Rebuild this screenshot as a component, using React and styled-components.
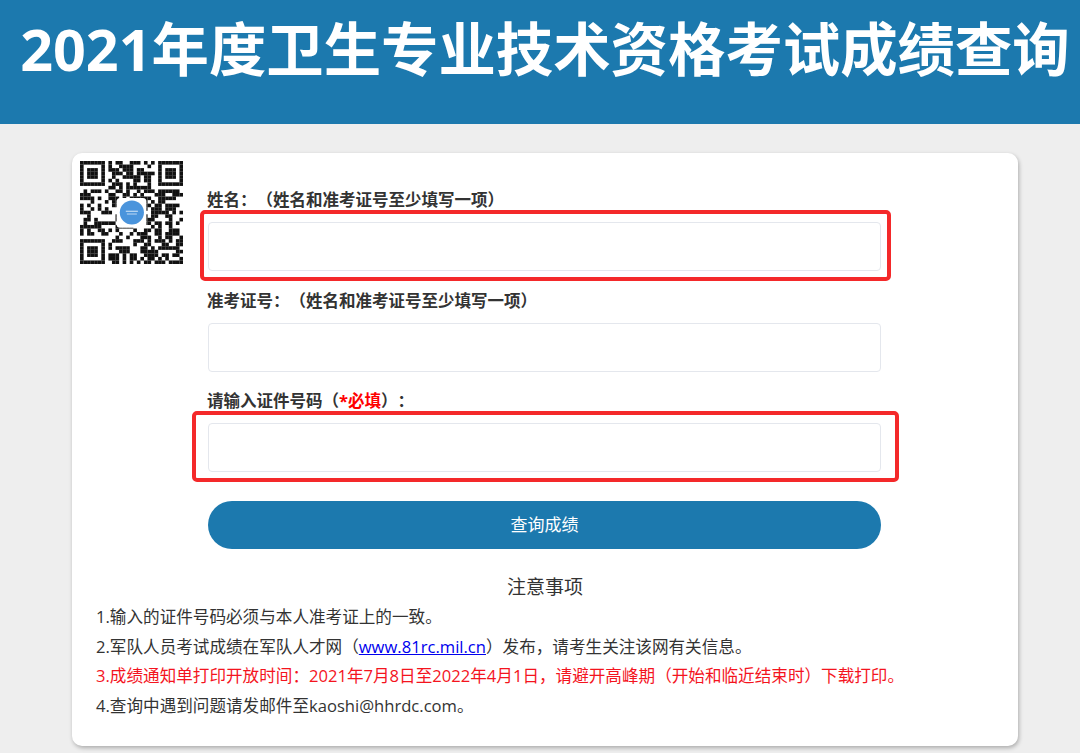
import React from "react";
import styled, { createGlobalStyle } from "styled-components";

const GlobalStyle = createGlobalStyle`
  html, body {
    margin: 0;
    padding: 0;
    background: #eeeeee;
  }
  body {
    font-family: "Open Sans", "Noto Sans CJK SC", sans-serif;
    color: #333;
    text-spacing-trim: space-all;
  }
  * {
    box-sizing: border-box;
  }
`;

const Page = styled.div`
  width: 1080px;
  height: 753px;
  overflow: hidden;
`;

const Header = styled.header`
  height: 124px;
  padding: 7px 0 0 10px;
  background: #1c79ae;
  text-align: center;
`;

const Title = styled.h1`
  margin: 0;
  color: #fff;
  font-family: "Open Sans", "Noto Sans CJK SC", sans-serif;
  font-size: 57.4px;
  font-weight: 700;
  line-height: 84px;
  white-space: nowrap;
`;

const Card = styled.main`
  width: 946px;
  height: 593px;
  margin: 29px 0 0 72px;
  padding: 8px;
  background: #fff;
  border-radius: 10px;
  box-shadow: 1px 2px 4px rgba(0, 0, 0, 0.28);
`;

const TopRow = styled.div`
  display: flex;
  gap: 25px;
`;

const QrBox = styled.div`
  flex: none;
  width: 103px;
  height: 103px;
  filter: blur(0.5px);
`;

const Form = styled.form`
  width: 673px;
  padding-top: 28px;
`;

const Field = styled.div`
  margin-bottom: 18.5px;
`;

const Label = styled.label`
  display: block;
  margin: 0 0 11px -1px;
  color: #333;
  font-size: 16.5px;
  font-weight: 700;
  line-height: 22px;
`;

const Required = styled.span`
  color: #f00;
`;

const InputWrap = styled.div`
  position: relative;
`;

const Input = styled.input`
  display: block;
  width: 100%;
  height: 49px;
  border: 1px solid #e4e7ed;
  border-radius: 4px;
  background: #fff;
  outline: none;
`;

// red hand-drawn annotation box lying over the field
const RedFrame = styled.div`
  position: absolute;
  top: -12px;
  bottom: -10px;
  left: ${(p) => p.$left}px;
  right: ${(p) => p.$right}px;
  border: 4px solid #f4292a;
  border-radius: 5px;
  pointer-events: none;
`;

const SubmitButton = styled.button`
  display: block;
  width: 100%;
  height: 48px;
  margin-top: 29px;
  padding: 0 0 3px;
  border: none;
  border-radius: 24px;
  background: #1c79ae;
  color: #fff;
  font-family: inherit;
  font-size: 17px;
`;

const NotesTitle = styled.div`
  margin-top: 25px;
  color: #333;
  font-size: 19px;
  line-height: 26px;
  text-align: center;
`;

const Notes = styled.ol`
  list-style: none;
  margin: 2px 0 0;
  padding: 0 0 0 16px;
`;

const Note = styled.li`
  color: ${(p) => (p.$alert ? "#f4141e" : "#333")};
  font-size: 16.6px;
  line-height: 29.5px;
  white-space: nowrap;
`;

const NoteLink = styled.a`
  color: #0000ee;
  text-decoration: underline;
`;

const QR_SIZE = 29;

const inFinder = (x, y) =>
  (x < 8 && y < 8) || (x >= QR_SIZE - 8 && y < 8) || (x < 8 && y >= QR_SIZE - 8);

const finderCell = (x, y) => {
  const fx = x >= QR_SIZE - 8 ? x - (QR_SIZE - 7) : x;
  const fy = y >= QR_SIZE - 8 ? y - (QR_SIZE - 7) : y;
  if (fx < 0 || fy < 0 || fx > 6 || fy > 6) return false;
  const ring = Math.min(fx, fy, 6 - fx, 6 - fy);
  return ring !== 1;
};

const buildCells = () => {
  const cells = [];
  let seed = 20210708;
  for (let y = 0; y < QR_SIZE; y++) {
    for (let x = 0; x < QR_SIZE; x++) {
      seed = (seed * 1103515245 + 12345) & 0x7fffffff;
      const on = inFinder(x, y) ? finderCell(x, y) : (seed >> 16) % 100 < 54;
      if (on) cells.push([x, y]);
    }
  }
  return cells;
};

const QrCode = () => (
  <svg width="103" height="103" viewBox={`0 0 ${QR_SIZE} ${QR_SIZE}`}>
    {buildCells().map(([x, y]) => (
      <rect key={`${x}-${y}`} x={x} y={y} width="1.02" height="1.02" fill="#111" />
    ))}
    <rect x="10.3" y="10.4" width="8.4" height="8.4" rx="1" fill="#fff" />
    <circle cx="14.6" cy="14.5" r="3.4" fill="#4a94dc" />
    <rect x="12.9" y="14" width="3.4" height="0.3" fill="#cfe3f7" />
    <rect x="13.2" y="14.8" width="2.8" height="0.25" fill="#cfe3f7" />
  </svg>
);

export default function App() {
  return (
    <Page>
      <GlobalStyle />
      <Header>
        <Title>2021年度卫生专业技术资格考试成绩查询</Title>
      </Header>
      <Card>
        <TopRow>
          <QrBox>
            <QrCode />
          </QrBox>
          <Form>
            <Field>
              <Label>姓名：（姓名和准考证号至少填写一项）</Label>
              <InputWrap>
                <Input type="text" />
                <RedFrame $left={-8} $right={-10} />
              </InputWrap>
            </Field>
            <Field>
              <Label>准考证号：（姓名和准考证号至少填写一项）</Label>
              <InputWrap>
                <Input type="text" />
              </InputWrap>
            </Field>
            <Field>
              <Label>
                请输入证件号码（<Required>*必填</Required>）：
              </Label>
              <InputWrap>
                <Input type="text" />
                <RedFrame $left={-16} $right={-18} />
              </InputWrap>
            </Field>
            <SubmitButton type="button">查询成绩</SubmitButton>
          </Form>
        </TopRow>
        <NotesTitle>注意事项</NotesTitle>
        <Notes>
          <Note>1.输入的证件号码必须与本人准考证上的一致。</Note>
          <Note>
            2.军队人员考试成绩在军队人才网（<NoteLink href="#">www.81rc.mil.cn</NoteLink>）发布，请考生关注该网有关信息。
          </Note>
          <Note $alert>3.成绩通知单打印开放时间：2021年7月8日至2022年4月1日，请避开高峰期（开始和临近结束时）下载打印。</Note>
          <Note>4.查询中遇到问题请发邮件至kaoshi@hhrdc.com。</Note>
        </Notes>
      </Card>
    </Page>
  );
}
